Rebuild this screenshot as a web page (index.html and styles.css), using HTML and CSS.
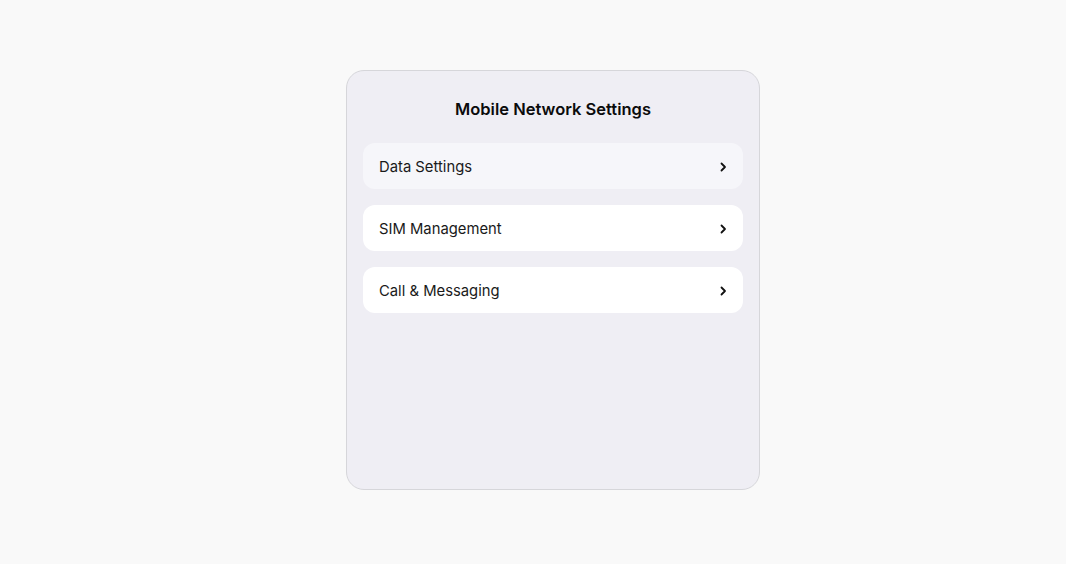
FILE: index.html
```html
<!DOCTYPE html>
<html lang="en">
<head>
<meta charset="utf-8">
<title>Mobile Network Settings</title>
<link rel="stylesheet" href="styles.css">
</head>
<body>
<main class="page">
  <section class="card">
    <h1 class="title">Mobile Network Settings</h1>
    <ul class="list">
      <li class="row row-hover"><span class="label">Data Settings</span>
        <svg class="chev" viewBox="0 0 8 12" width="8" height="12"><path d="M2.5 2.5l3.5 3.5-3.5 3.5" fill="none" stroke="#111" stroke-width="1.8" stroke-linecap="round" stroke-linejoin="round"/></svg>
      </li>
      <li class="row"><span class="label">SIM Management</span>
        <svg class="chev" viewBox="0 0 8 12" width="8" height="12"><path d="M2.5 2.5l3.5 3.5-3.5 3.5" fill="none" stroke="#111" stroke-width="1.8" stroke-linecap="round" stroke-linejoin="round"/></svg>
      </li>
      <li class="row"><span class="label">Call &amp; Messaging</span>
        <svg class="chev" viewBox="0 0 8 12" width="8" height="12"><path d="M2.5 2.5l3.5 3.5-3.5 3.5" fill="none" stroke="#111" stroke-width="1.8" stroke-linecap="round" stroke-linejoin="round"/></svg>
      </li>
    </ul>
  </section>
</main>
</body>
</html>
```

FILE: styles.css
```css
* { box-sizing: border-box; }
html, body { margin: 0; padding: 0; }
body {
  background: #f9f9f9;
  font-family: Inter, "Noto Sans", "Liberation Sans", sans-serif;
  color: #111;
}
.page {
  display: flex;
  justify-content: center;
  padding-top: 70px;
  padding-left: 40px;
}
.card {
  width: 414px;
  height: 420px;
  background: #efeef4;
  border: 1px solid #d6d6da;
  border-radius: 18px;
  padding: 26px 16px 16px;
}
.title {
  margin: 0 0 22px;
  text-align: center;
  font-size: 16.5px;
  font-weight: 600;
  line-height: 24px;
  color: #0b0b0b;
}
.list {
  list-style: none;
  margin: 0;
  padding: 0;
  display: flex;
  flex-direction: column;
  gap: 16px;
}
.row {
  height: 46px;
  background: #ffffff;
  border-radius: 12px;
  display: flex;
  align-items: center;
  justify-content: space-between;
  padding: 2px 16px 0;
}
.row-hover { background: #f6f6fa; }
.label {
  font-size: 14.8px;
  color: #1a1a1a;
}
.chev { display: block; }
```
